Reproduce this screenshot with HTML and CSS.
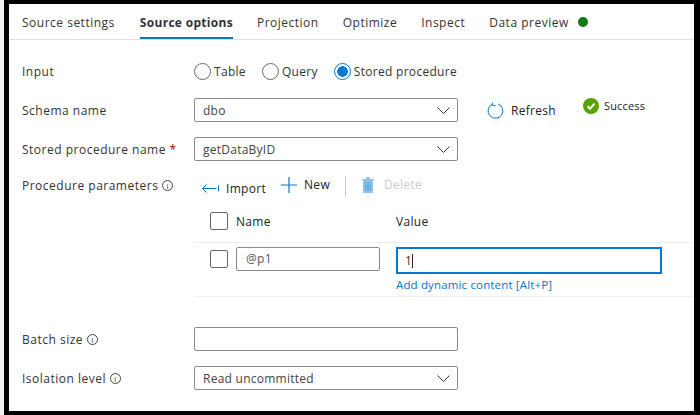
FILE: index.html
```html
<!DOCTYPE html>
<html lang="en">
<head>
    <meta charset="UTF-8">
    <title>Source options</title>
    <link rel="stylesheet" href="styles.css">
</head>
<body>
<div class="frame">
    <!-- Tab strip -->
    <div class="tabs">
        <span class="tab">Source settings</span>
        <span class="tab active">Source options</span>
        <span class="tab">Projection</span>
        <span class="tab">Optimize</span>
        <span class="tab">Inspect</span>
        <span class="tab">Data preview <i class="dot"></i></span>
    </div>

    <div class="form">
        <div class="row">
            <div class="label">Input</div>
            <div class="radios">
                <span class="radio"><i class="circle"></i>Table</span>
                <span class="radio"><i class="circle"></i>Query</span>
                <span class="radio"><i class="circle on"></i>Stored procedure</span>
            </div>
        </div>

        <div class="row">
            <div class="label">Schema name</div>
            <div class="select">dbo
                <svg class="chev" viewBox="0 0 13 7"><path d="M.5.5l6 6 6-6"/></svg>
            </div>
            <span class="refresh">
                <svg width="17" height="17" viewBox="0 0 17 17" fill="none" stroke="#0078d4"><path d="M5.2 2.2A7.4 7.4 0 1 0 11 1.9"/><path d="M5.6 .6v3h3"/></svg>
                Refresh
            </span>
            <span class="success">
                <svg width="16" height="16" viewBox="0 0 16 16"><circle cx="8" cy="8" r="8" fill="#57a300"/><path d="M4.5 8.2l2.5 2.5 4.5-5" fill="none" stroke="#fff" stroke-width="2"/></svg>
                Success
            </span>
        </div>

        <div class="row">
            <div class="label">Stored procedure name <b class="req">*</b></div>
            <div class="select">getDataByID
                <svg class="chev" viewBox="0 0 13 7"><path d="M.5.5l6 6 6-6"/></svg>
            </div>
        </div>

        <div class="params">
            <div class="label">Procedure parameters <i class="info">i</i></div>
            <div class="toolbar">
                <span class="tool import">
                    <svg width="17" height="9" viewBox="0 0 17 9" fill="none" stroke="#0078d4"><path d="M4.5.5l-4 4 4 4M.5 4.5h14M16.5 1.5v6"/></svg>
                    Import
                </span>
                <span class="tool">
                    <svg width="16" height="16" viewBox="0 0 16 16" fill="none" stroke="#0078d4" stroke-width="1.2"><path d="M8 0v16M0 8h16"/></svg>
                    New
                </span>
                <i class="sep"></i>
                <span class="tool off">
                    <svg width="14" height="17" viewBox="0 0 14 17"><path d="M1 3h12v1h-1v13H2V4H1zM5 1h4v2H5z" fill="#8fc3ea"/><path d="M4 6h6v9H4z" fill="#6cb0e4"/></svg>
                    Delete
                </span>
            </div>
        </div>

        <div class="table-head">
            <i class="check"></i>
            <span class="col-name">Name</span>
            <span class="col-value">Value</span>
        </div>

        <div class="table-row">
            <i class="check"></i>
            <div class="name-box">@p1</div>
            <div class="value-col">
                <div class="value-box">1<i class="caret"></i></div>
                <a class="link">Add dynamic content [Alt+P]</a>
            </div>
        </div>

        <div class="row batch">
            <div class="label">Batch size <i class="info">i</i></div>
            <div class="select"></div>
        </div>

        <div class="row">
            <div class="label">Isolation level <i class="info">i</i></div>
            <div class="select">Read uncommitted
                <svg class="chev" viewBox="0 0 13 7"><path d="M.5.5l6 6 6-6"/></svg>
            </div>
        </div>
    </div>
</div>
</body>
</html>
```

FILE: styles.css
```css
html, body {
    margin: 0;
    padding: 0;
}
html {
    background-color: #f3f3f3;
}
body {
    background-color: #000;
    height: 415px;
    margin-left: 4px;
    overflow: hidden;
    font-family: "Open Sans", "Noto Sans", sans-serif;
    font-size: 12px;
    letter-spacing: 0.3px;
    color: #333;
}
.frame {
    background-color: #fff;
    margin: 4px 6px 0 5px;
    height: 407px;
    box-sizing: border-box;
}
i {
    font-style: normal;
}

/* Tabs */
.tabs {
    display: flex;
    gap: 24px;
    height: 36px;
    box-sizing: border-box;
    padding-left: 13px;
    border-bottom: 1px solid #e1e1e1;
    letter-spacing: 0.5px;
}
.tab {
    height: 35px;
    line-height: 37px;
    box-sizing: border-box;
}
.tab.active {
    margin-left: 1px;
    font-weight: 700;
    letter-spacing: 0.3px;
    color: #333;
    border-bottom: 2px solid #0078d4;
}
.dot {
    display: inline-block;
    width: 10px;
    height: 10px;
    margin-left: 6px;
    border-radius: 50%;
    background-color: #107c10;
}

/* Form rows */
.form {
    padding-left: 13px;
}
.row {
    display: flex;
    align-items: center;
    height: 24px;
    margin-top: 15px;
}
.row:first-child {
    margin-top: 19px;
}
.label {
    width: 172px;
    flex: none;
    letter-spacing: 0.5px;
}
.req {
    color: #a80000;
    font-weight: 400;
}
.info {
    display: inline-block;
    width: 9px;
    height: 9px;
    border: 1px solid #444;
    border-radius: 50%;
    font-size: 8px;
    line-height: 9px;
    text-align: center;
    vertical-align: 1px;
    letter-spacing: 0;
}
.radios {
    display: flex;
    gap: 16px;
}
.radio {
    display: flex;
    align-items: center;
    gap: 3px;
}
.circle {
    width: 15px;
    height: 15px;
    border: 1px solid #666;
    border-radius: 50%;
    background-color: #fff;
}
.circle.on {
    border-color: #0078d4;
    background: radial-gradient(circle, #0078d4 0 5px, #fff 5.5px);
}
.select {
    position: relative;
    width: 264px;
    height: 24px;
    box-sizing: border-box;
    border: 1px solid #8a8a8a;
    border-radius: 2px;
    padding-left: 8px;
    line-height: 24px;
    letter-spacing: 0.25px;
    color: #444;
}
.chev {
    position: absolute;
    right: 7px;
    top: 8px;
    width: 13px;
    height: 7px;
    fill: none;
    stroke: #333;
}
.refresh {
    display: flex;
    align-items: center;
    gap: 7px;
    margin-left: 29px;
    color: #222;
}
.success {
    display: flex;
    align-items: center;
    gap: 5px;
    margin-left: 27px;
    margin-top: -9px;
    font-size: 11px;
    letter-spacing: 0.15px;
    color: #222;
}

/* Procedure parameters */
.params {
    display: flex;
    margin-top: 12px;
    height: 24px;
}
.params .label {
    padding-top: 4px;
}
.toolbar {
    display: flex;
    align-items: center;
    margin-left: 8px;
    margin-top: -1px;
}
.tool {
    display: flex;
    align-items: center;
    gap: 7px;
    margin-right: 14px;
    color: #222;
}
.import {
    padding-top: 8px;
    margin-right: 15px;
}
.sep {
    width: 1px;
    height: 21px;
    margin-top: 4px;
    margin-left: 1px;
    margin-right: 15px;
    background-color: #ccc;
}
.off {
    gap: 9px;
    color: #ccc;
}
.table-head {
    display: flex;
    align-items: center;
    height: 42px;
    margin-left: 172px;
    padding-left: 16px;
    margin-top: 3px;
    border-bottom: 1px solid #eee;
    color: #222;
}
.check {
    width: 18px;
    height: 18px;
    flex: none;
    box-sizing: border-box;
    border: 1px solid #666;
    border-radius: 2px;
}
.col-name {
    margin-left: 8px;
    width: 160px;
}
.table-row {
    display: flex;
    align-items: flex-start;
    margin-left: 172px;
    padding-left: 16px;
    padding-top: 4px;
    height: 49px;
    border-bottom: 1px solid #eee;
}
.table-row .check {
    margin-top: 3px;
}
.name-box {
    width: 144px;
    height: 24px;
    margin-left: 8px;
    box-sizing: border-box;
    border: 1px solid #8a8a8a;
    border-radius: 2px;
    padding-left: 9px;
    line-height: 22px;
    color: #555;
}
.value-col {
    margin-left: 16px;
}
.value-box {
    width: 266px;
    height: 27px;
    box-sizing: border-box;
    border: 2px solid #0078d4;
    padding-left: 7px;
    line-height: 23px;
    color: #333;
}
.caret {
    display: inline-block;
    width: 1px;
    height: 14px;
    background-color: #222;
    vertical-align: -3px;
}
.link {
    display: block;
    margin-top: 3px;
    font-size: 11.5px;
    letter-spacing: 0.15px;
    color: #0078d4;
}
.row.batch {
    margin-top: 30px;
}
```
